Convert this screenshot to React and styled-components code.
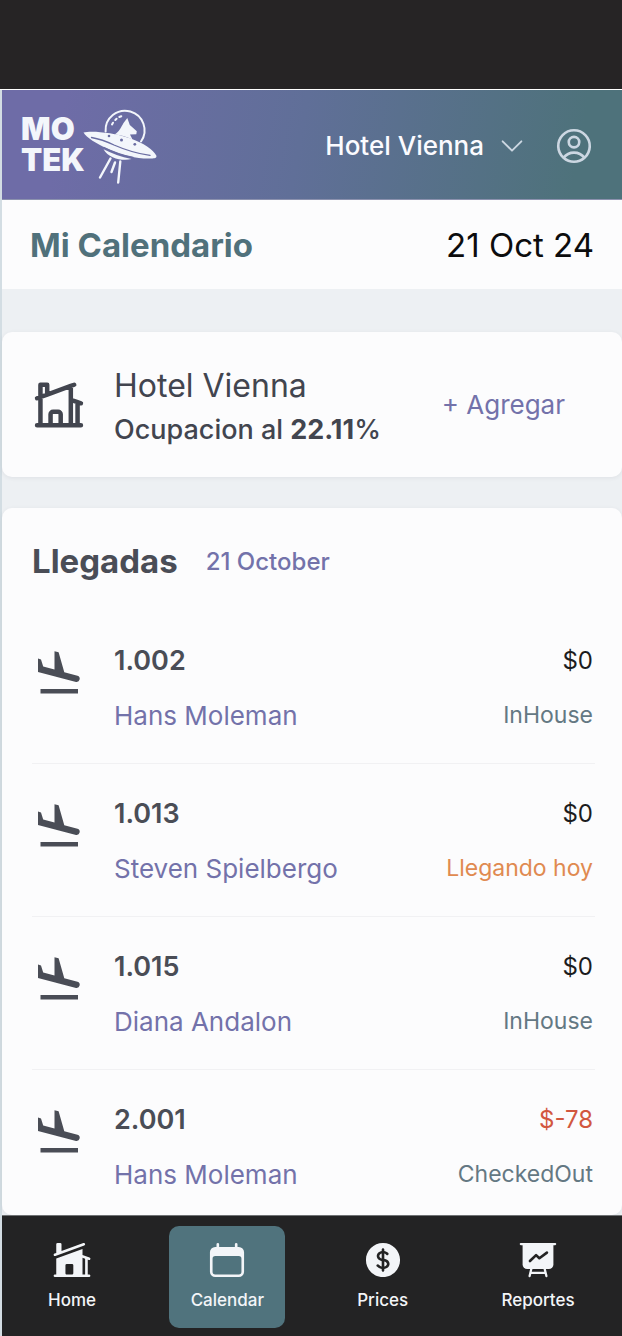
import React from 'react'
import styled, { createGlobalStyle } from 'styled-components'
import {
  HiCalendar,
  HiCurrencyDollar,
  HiHomeModern,
  HiOutlineChevronDown,
  HiOutlineHomeModern,
  HiOutlineUserCircle
} from 'react-icons/hi2'

const GlobalStyle = createGlobalStyle`
  * {
    box-sizing: border-box;
  }

  body {
    margin: 0;
    background: #edf0f3;
    font-family: Inter, 'Liberation Sans', sans-serif;
    color: #42454f;
  }

  h1, h2, h3, p, ul {
    margin: 0;
    padding: 0;
  }
`

const Page = styled.div`
  min-height: 100vh;
  display: flex;
  flex-direction: column;
  border-left: 2px solid #d3dde3;
`

const StatusBar = styled.div`
  height: 90px;
  margin-left: -2px;
  background: #262425;
  border-bottom: 1px solid #fff;
`

const Header = styled.header`
  height: 110px;
  padding: 2px 27px 0 19px;
  display: flex;
  align-items: center;
  justify-content: space-between;
  background: linear-gradient(100deg, #6e6ca7 10%, #606f98 48%, #4e727b 92%);
  border-bottom: 1px solid #8b91ae;
`

const HeaderActions = styled.div`
  display: flex;
  align-items: center;
  gap: 26px;
`

const HeaderButton = styled.button`
  display: flex;
  align-items: center;
  gap: 13px;
  padding: 0;
  border: 0;
  background: none;
  color: #fbfbff;
  font: 500 26px/32px Inter, sans-serif;

  svg {
    color: #ccd7e2;
  }
`

const TitleBar = styled.div`
  height: 89px;
  padding: 0 28px;
  display: flex;
  align-items: center;
  justify-content: space-between;
  background: #fcfcfd;
`

const Title = styled.h1`
  font-size: 33px;
  font-weight: 700;
  color: #50717b;
`

const Today = styled.p`
  font-size: 33px;
  color: #0c0c0d;
`

const Card = styled.section`
  background: #fcfcfd;
  border-radius: 10px;
  box-shadow: 0 1px 4px rgba(60, 70, 80, 0.08);
`

const Summary = styled(Card)`
  height: 145px;
  margin-top: 43px;
  padding: 0 57px 0 30px;
  display: flex;
  align-items: center;
  gap: 28px;
`

const SummaryText = styled.div`
  flex: 1;
  padding-top: 6px;
`

const HotelName = styled.h2`
  font-size: 32px;
  line-height: 44px;
  font-weight: 400;
`

const Occupancy = styled.p`
  font-size: 27px;
  line-height: 44px;
  font-weight: 500;
`

const AddButton = styled.button`
  padding: 0;
  border: 0;
  background: none;
  color: #7372aa;
  font: 400 26px/32px Inter, sans-serif;
`

const Arrivals = styled(Card)`
  flex: 1;
  margin-top: 31px;
  padding: 30px 27px 0 30px;
`

const ArrivalsHeader = styled.div`
  display: flex;
  align-items: center;
  gap: 28px;
`

const ArrivalsTitle = styled.h2`
  font-size: 33px;
  line-height: 46px;
  font-weight: 700;
  color: #4a4d56;
`

const ArrivalsDate = styled.p`
  font-size: 24px;
  font-weight: 500;
  color: #7372aa;
`

const List = styled.ul`
  margin-top: 27px;
  list-style: none;
`

const Row = styled.li`
  height: 153px;
  padding-top: 22px;
  display: flex;
  align-items: flex-start;
  border-bottom: 1px solid #f1f1f3;

  &:last-child {
    border-bottom: 0;
    height: 143px;
  }
`

const RowIcon = styled.span`
  width: 82px;
  padding: 15px 0 0 4px;
  color: #4a4d56;
`

const Guest = styled.div`
  flex: 1;
`

const Status = styled.div`
  text-align: right;
  padding-right: 2px;
`

const Room = styled.h3`
  font-size: 27px;
  line-height: 55px;
  font-weight: 600;
  color: #4a4d56;
`

const GuestLink = styled.a`
  display: block;
  font-size: 26px;
  line-height: 55px;
  color: #7372aa;
  text-decoration: none;
`

const Amount = styled.p`
  font-size: 24px;
  line-height: 55px;
  color: ${props => (props.$negative ? '#d2573f' : '#1c1c1e')};
`

const State = styled.p`
  font-size: 23px;
  line-height: 55px;
  color: ${props => (props.$today ? '#e08a50' : '#647883')};
`

const Nav = styled.nav`
  height: 121px;
  padding: 10px 26px 0 12px;
  display: flex;
  justify-content: space-between;
  background: #232324;
  border-top: 1px solid #6f7274;
`

const NavLink = styled.a`
  width: 116px;
  height: 102px;
  padding-top: 13px;
  display: flex;
  flex-direction: column;
  align-items: center;
  gap: 7px;
  border-radius: 10px;
  background: ${props => (props.$active ? '#50737d' : 'transparent')};
  color: #f3f5f8;
  font-size: 17px;
  line-height: 24px;
  font-weight: 500;
  text-decoration: none;
`

const LogoLink = styled.a`
  display: flex;
  align-items: center;
  color: #f3f6fb;
  text-decoration: none;
`

const LogoText = styled.span`
  width: 61px;
  padding-bottom: 4px;
  display: flex;
  flex-direction: column;
  font-size: 31px;
  line-height: 31px;
  font-weight: 900;
`

const Logo = () => (
  <LogoLink href="#home">
    <LogoText>
      <span>MO</span>
      <span>TEK</span>
    </LogoText>
    <svg
      width="76"
      height="78"
      viewBox="82 107 76 78"
      fill="none"
      stroke="currentColor"
      strokeWidth="2"
      strokeLinecap="round"
      aria-hidden="true"
    >
      {/* dome */}
      <path d="M105.6 131.5A19.5 19.5 0 1 1 141 141.5" />
      <path d="M112 124.5l1-1.8M115.3 120l1.3-1.3M119.3 117l2-.8" />
      {/* dog */}
      <path
        d="M114.5 134.5C119 132 121 127.5 123.5 123L127.3 118L129.8 125L136.8 131.2L136.3 134.2L130 134.6L132.5 139.5C126 136.5 120 135 114.5 134.5Z"
        fill="currentColor"
        stroke="none"
      />
      {/* saucer */}
      <path
        d="M83.5 132.4C91 130.5 112 132 130 138.2C144 143.2 153 149.5 156.3 155.5C157 157.6 155.5 158.2 152.5 158.4C140 159.4 124 156 109 149.4C96 143.5 86.5 137.5 83.5 132.4Z"
        fill="currentColor"
        stroke="none"
      />
      <path d="M91.5 137.5C100 139 106 141.2 114 145C125 149.8 138 153.8 150 155.4" stroke="#6a6da2" strokeWidth="1.3" />
      <path d="M104 147.6C111 151 121 155.4 133 157.4" stroke="#6a6da2" strokeWidth="1.4" />
      <path
        d="M103.5 149.2C112 153.6 121 156.9 131.5 159C123 161.4 108.5 158.5 103.5 149.2Z"
        fill="currentColor"
        stroke="none"
      />
      <g fill="#6a6da2" stroke="none">
        <circle cx="109" cy="136" r="1.3" />
        <circle cx="121.5" cy="140" r="1.5" />
        <circle cx="134.8" cy="144.3" r="1.4" />
      </g>
      {/* rays */}
      <path d="M110.5 158.5L100 177.5M115 162.5L111.5 172M120.3 161.5L118.2 182.5" strokeWidth="2.4" />
    </svg>
  </LogoLink>
)

const LandingIcon = () => (
  <svg width="48" height="48" viewBox="0 0 48 48" fill="currentColor" aria-hidden="true">
    <path d="M2 10.5L5 11.5L7.2 18.5L18.5 21.5V3.2L22.6 4.3L28.3 24.2L41.5 27.8A3.2 3.2 0 0 1 40 34L2 24Z" />
    <path d="M4.5 41H42v4.5H4.5z" />
  </svg>
)

const ReportIcon = ({ size }) => (
  <svg
    width={size}
    height={size}
    viewBox="0 0 24 24"
    fill="none"
    stroke="currentColor"
    strokeWidth="1.3"
    strokeLinecap="round"
    strokeLinejoin="round"
    aria-hidden="true"
  >
    <path d="M3.2 3H20.8V14.6A2.6 2.6 0 0 1 18.2 17.2H5.8A2.6 2.6 0 0 1 3.2 14.6Z" fill="currentColor" stroke="none" />
    <path d="M2.2 2.9H21.8M8.2 17L7.2 21.2M15.8 17L16.8 21.2M7.8 19.4H16.2" />
    <path d="M7.4 12.6L10.9 9.2L12.8 11L17.1 7.8" stroke="#232324" strokeWidth="1.5" />
  </svg>
)

const arrivals = [
  { room: '1.002', guest: 'Hans Moleman', amount: '$0', state: 'InHouse' },
  { room: '1.013', guest: 'Steven Spielbergo', amount: '$0', state: 'Llegando hoy', today: true },
  { room: '1.015', guest: 'Diana Andalon', amount: '$0', state: 'InHouse' },
  { room: '2.001', guest: 'Hans Moleman', amount: '$-78', state: 'CheckedOut', negative: true }
]

const links = [
  { label: 'Home', Icon: HiHomeModern },
  { label: 'Calendar', Icon: HiCalendar, active: true },
  { label: 'Prices', Icon: HiCurrencyDollar },
  { label: 'Reportes', Icon: ReportIcon }
]

export default function App() {
  return (
    <Page>
      <GlobalStyle />
      <StatusBar />
      <Header>
        <Logo />
        <HeaderActions>
          <HeaderButton>
            Hotel Vienna
            <HiOutlineChevronDown size={30} />
          </HeaderButton>
          <HeaderButton aria-label="Profile">
            <HiOutlineUserCircle size={42} />
          </HeaderButton>
        </HeaderActions>
      </Header>
      <TitleBar>
        <Title>Mi Calendario</Title>
        <Today>21 Oct 24</Today>
      </TitleBar>
      <Summary>
        <HiOutlineHomeModern size={54} strokeWidth={2} />
        <SummaryText>
          <HotelName>Hotel Vienna</HotelName>
          <Occupancy>
            Ocupacion al <b>22.11</b>%
          </Occupancy>
        </SummaryText>
        <AddButton>+ Agregar</AddButton>
      </Summary>
      <Arrivals>
        <ArrivalsHeader>
          <ArrivalsTitle>Llegadas</ArrivalsTitle>
          <ArrivalsDate>21 October</ArrivalsDate>
        </ArrivalsHeader>
        <List>
          {arrivals.map(item => (
            <Row key={item.room}>
              <RowIcon>
                <LandingIcon />
              </RowIcon>
              <Guest>
                <Room>{item.room}</Room>
                <GuestLink href="#guest">{item.guest}</GuestLink>
              </Guest>
              <Status>
                <Amount $negative={item.negative}>{item.amount}</Amount>
                <State $today={item.today}>{item.state}</State>
              </Status>
            </Row>
          ))}
        </List>
      </Arrivals>
      <Nav>
        {links.map(({ label, Icon, active }) => (
          <NavLink key={label} href={`#${label.toLowerCase()}`} $active={active}>
            <Icon size={42} />
            {label}
          </NavLink>
        ))}
      </Nav>
    </Page>
  )
}
